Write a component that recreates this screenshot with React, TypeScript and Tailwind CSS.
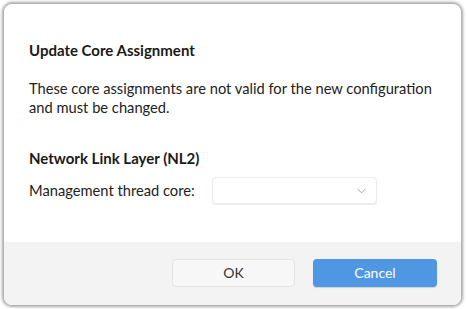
import React from "react";

const App = () => {
  return (
    <div
      className="w-[467px] h-[309px] bg-white p-[4px] pr-[6px] pb-[4px]"
      style={{ fontFamily: "Lato, 'Noto Sans', sans-serif" }}
    >
      <div className="h-full flex flex-col rounded-[8px] bg-white overflow-hidden shadow-[0_0_3px_2px_rgba(0,0,0,0.35)]">
        {/* Body */}
        <div className="flex-1 pl-[25px] pr-[20px] pt-[37px]">
          <h1 className="text-[15px] font-bold text-[#1a1a1a] leading-[19px]">
            Update Core Assignment
          </h1>
          <p className="mt-[19px] text-[14.7px] text-[#222] leading-[19px]">
            These core assignments are not valid for the new configuration and
            must be changed.
          </p>
          <h2 className="mt-[32px] text-[15px] font-bold text-[#1a1a1a] leading-[19px]">
            Network Link Layer (NL2)
          </h2>
          <div className="mt-[9px] flex items-center gap-[17px]">
            <span className="text-[14.7px] text-[#222]">Management thread core:</span>
            <div className="w-[165px] h-[27px] rounded-[4px] bg-white border border-[#ececec] shadow-[0_1px_1px_rgba(0,0,0,0.08)] flex items-center justify-end pr-[10px]">
              <svg width="9" height="6" viewBox="0 0 9 6" fill="none">
                <path d="M0.5 0.8L4.5 4.8L8.5 0.8" stroke="#a0a0a0" strokeWidth="1" />
              </svg>
            </div>
          </div>
        </div>
        {/* Footer */}
        <div className="h-[63px] bg-[#f3f3f3] flex items-center justify-end gap-[18px] pr-[24px] pb-[2px]">
          <button className="w-[123px] h-[28px] rounded-[4px] bg-[#f7f7f7] border border-[#e3e3e3] text-[14px] text-[#333]">
            OK
          </button>
          <button className="w-[124px] h-[28px] rounded-[4px] bg-[#4f97e3] text-[14px] text-white shadow-[0_1px_1px_rgba(0,0,0,0.15)]">
            Cancel
          </button>
        </div>
      </div>
    </div>
  );
};

export default App;
